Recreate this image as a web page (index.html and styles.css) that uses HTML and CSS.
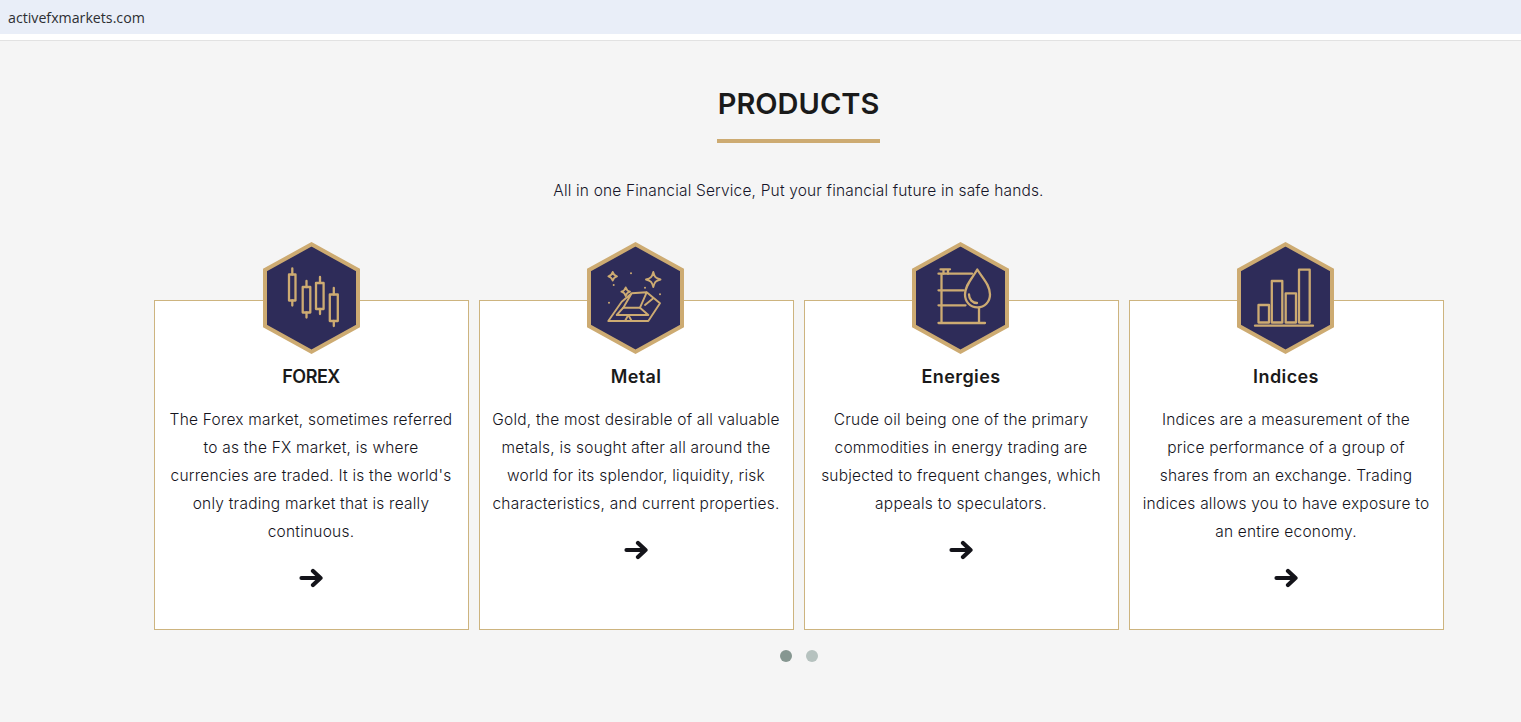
FILE: index.html
```html
<!DOCTYPE html>
<html lang="en">
<head>
<meta charset="utf-8">
<title>Products</title>
<link rel="stylesheet" href="styles.css">
</head>
<body>
<div class="urlbar">activefxmarkets.com</div>
<main class="page">
  <h1 class="heading">PRODUCTS</h1>
  <div class="rule"></div>
  <p class="lead">All in one Financial Service, Put your financial future in safe hands.</p>
  <section class="cards">
    <article class="card">
      <svg class="hex" viewBox="0 0 97 112">
        <polygon class="hex-shape" points="48.5,2.3 95,28 95,84 48.5,109.7 2,84 2,28"/>
        <g class="ico">
          <rect x="26" y="32.5" width="6.5" height="26"/><path d="M29.3 26.5v6M29.3 58.5v5"/>
          <rect x="39.7" y="45" width="7.6" height="25.5"/><path d="M43.5 39v6M43.5 70.5v5"/>
          <rect x="53" y="41" width="7.6" height="26"/><path d="M57 35v6M57 67v5"/>
          <rect x="66.8" y="52.5" width="8" height="26.5"/><path d="M70.8 46v6.5M70.8 79v5"/>
        </g>
      </svg>
      <h2 class="title title-caps">FOREX</h2>
      <p class="text">The Forex market, sometimes referred<br>to as the FX market, is where<br>currencies are traded. It is the world's<br>only trading market that is really<br>continuous.</p>
      <svg class="arrow" viewBox="0 0 24 20"><path d="M2.5 10H21.5M14 3L21.5 10L14 17"/></svg>
    </article>
    <article class="card">
      <svg class="hex" viewBox="0 0 97 112">
        <polygon class="hex-shape" points="48.5,2.3 95,28 95,84 48.5,109.7 2,84 2,28"/>
        <g class="ico ico-fine">
          <path d="M66.3 30C67.5 35 68.5 36.2 73.5 37.5C68.5 38.8 67.5 40 66.3 45C65 40 64 38.8 59 37.5C64 36.2 65 35 66.3 30Z"/>
          <path d="M25.7 30C26.5 32.8 27.2 33.5 30 34.3C27.2 35.1 26.5 35.8 25.7 38.6C24.9 35.8 24.2 35.1 21.4 34.3C24.2 33.5 24.9 32.8 25.7 30Z"/>
          <path d="M38.7 45.5C39.5 48.2 40.2 48.9 43 49.7C40.2 50.5 39.5 51.2 38.7 54C37.9 51.2 37.2 50.5 34.4 49.7C37.2 48.9 37.9 48.2 38.7 45.5Z"/>
          <path d="M21.3 79L34.7 59.7L44.7 51.3M21.3 79H61.3L73 61.3L59.7 50.3L44.7 51.3L36.3 65.7H53L59.7 50.3"/>
          <path d="M36.3 65.7L29.7 73H61.3L53 65.7M58 63L66.3 56.3M38 79L41.3 73L44.7 79"/>
        </g>
        <g class="dots">
          <circle cx="44" cy="31.3" r="1"/><circle cx="26.7" cy="43" r="1"/><circle cx="58" cy="45.7" r="1"/><circle cx="73" cy="52.3" r="1"/><circle cx="22" cy="60.7" r="1"/>
        </g>
      </svg>
      <h2 class="title">Metal</h2>
      <p class="text">Gold, the most desirable of all valuable<br>metals, is sought after all around the<br>world for its splendor, liquidity, risk<br>characteristics, and current properties.</p>
      <svg class="arrow" viewBox="0 0 24 20"><path d="M2.5 10H21.5M14 3L21.5 10L14 17"/></svg>
    </article>
    <article class="card">
      <svg class="hex" viewBox="0 0 97 112">
        <polygon class="hex-shape" points="48.5,2.3 95,28 95,84 48.5,109.7 2,84 2,28"/>
        <g class="ico">
          <path d="M29.5 31.7V81M67 66V81M26.5 31.7H60M26.5 48.3H51.5M26.5 63.3H53.5M26.5 81H73"/>
          <path d="M28.5 27.3H38M31.5 27.3V31.7M36 27.3V31.7"/>
          <path d="M65.3 27.5C60.5 36 53 43 53 52.5C53 60 58.5 65.3 65.5 65.3C72.5 65.3 78 60 78 52.5C78 43 70.5 36 65.3 27.5Z"/>
          <path d="M57 52.5C57 57.5 60.5 61 65 61"/>
        </g>
      </svg>
      <h2 class="title">Energies</h2>
      <p class="text">Crude oil being one of the primary<br>commodities in energy trading are<br>subjected to frequent changes, which<br>appeals to speculators.</p>
      <svg class="arrow" viewBox="0 0 24 20"><path d="M2.5 10H21.5M14 3L21.5 10L14 17"/></svg>
    </article>
    <article class="card">
      <svg class="hex" viewBox="0 0 97 112">
        <polygon class="hex-shape" points="48.5,2.3 95,28 95,84 48.5,109.7 2,84 2,28"/>
        <g class="ico">
          <rect x="21.5" y="63" width="10.5" height="17.5"/>
          <rect x="34.8" y="39" width="10.5" height="41.5"/>
          <rect x="48.7" y="51.3" width="10.3" height="29.2"/>
          <rect x="62" y="27.7" width="10.7" height="52.8"/>
          <path d="M18 83.7H76"/>
        </g>
      </svg>
      <h2 class="title">Indices</h2>
      <p class="text">Indices are a measurement of the<br>price performance of a group of<br>shares from an exchange. Trading<br>indices allows you to have exposure to<br>an entire economy.</p>
      <svg class="arrow" viewBox="0 0 24 20"><path d="M2.5 10H21.5M14 3L21.5 10L14 17"/></svg>
    </article>
  </section>
  <div class="pager"><span class="dot dot-on"></span><span class="dot"></span></div>
</main>
</body>
</html>
```
FILE: styles.css
```css
* { box-sizing: border-box; }
html, body { margin: 0; padding: 0; }
body {
  height: 722px;
  overflow: hidden;
  background: #fff;
  font-family: Inter, "Liberation Sans", sans-serif;
  color: #1e1e26;
}
.urlbar {
  height: 34px;
  margin-bottom: 6px;
  padding: 8px 8px 0;
  background: #e9eef8;
  font: 14.2px/19px "Open Sans", "Noto Sans", sans-serif;
  color: #2d2f33;
}
.page {
  height: 682px;
  padding: 45px 0 0 76px;
  border-top: 1px solid #e2e2e2;
  background: #f5f5f5;
  display: flex;
  flex-direction: column;
  align-items: center;
}
.heading {
  margin: 0;
  width: 163px;
  text-align: center;
  font-size: 29px;
  line-height: 36px;
  font-weight: 600;
  white-space: nowrap;
  color: #1a1a1a;
}
.rule {
  width: 163px;
  height: 4px;
  margin-top: 17px;
  background: #cdab72;
}
.lead {
  margin: 37px 0 0;
  font-size: 15.5px;
  line-height: 22px;
  font-weight: 300;
  letter-spacing: .17px;
  color: #16162a;
}
.cards {
  display: grid;
  grid-template-columns: repeat(4, 315px);
  column-gap: 10px;
  margin-top: 98px;
}
.card {
  position: relative;
  height: 330px;
  padding-top: 63px;
  border: 1px solid #cdb47f;
  background: #fff;
  display: flex;
  flex-direction: column;
  align-items: center;
}
.hex {
  position: absolute;
  top: -59px;
  left: 108px;
  width: 97px;
  height: 112px;
}
.card + .card .hex { left: 107px; }
.hex-shape {
  fill: #2e2c59;
  stroke: #cdab72;
  stroke-width: 4;
}
.ico {
  fill: none;
  stroke: #cdab72;
  stroke-width: 2.3;
  stroke-linejoin: round;
  stroke-linecap: round;
}
.ico-fine { stroke-width: 1.9; }
.dots { fill: #cdab72; }
.title {
  margin: 0;
  font-size: 18px;
  line-height: 26px;
  font-weight: 600;
  letter-spacing: .4px;
  color: #1a1a1a;
}
.title-caps { letter-spacing: -.5px; }
.text {
  margin: 16px 0 0;
  font-size: 15.5px;
  line-height: 28px;
  font-weight: 300;
  letter-spacing: .22px;
  text-align: center;
  white-space: nowrap;
  color: #14141c;
}
.arrow {
  width: 24px;
  height: 20px;
  margin-top: 22px;
  fill: none;
  stroke: #14141a;
  stroke-width: 4.2;
  stroke-linecap: round;
  stroke-linejoin: round;
}
.pager {
  display: flex;
  gap: 14px;
  margin-top: 20px;
}
.dot {
  width: 12px;
  height: 12px;
  border-radius: 50%;
  background: #b6c2bf;
}
.dot-on { background: #869791; }
```
